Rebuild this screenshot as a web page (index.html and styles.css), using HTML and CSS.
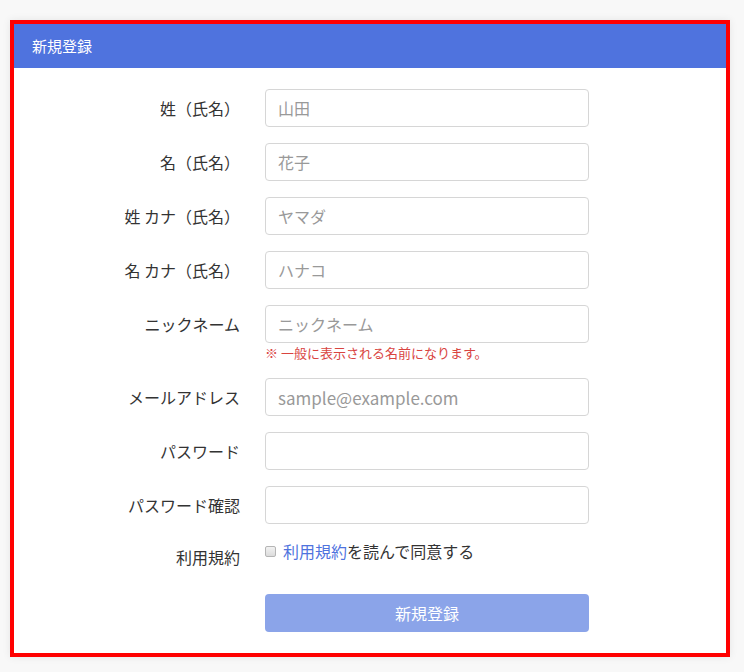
FILE: index.html
```html
<!DOCTYPE html>
<html lang="ja">
  <head>
    <meta charset="utf-8" />
    <title>新規登録</title>
    <link rel="stylesheet" href="styles.css">
  </head>
  <body>
    <div class="panel">
      <div class="panel-heading">新規登録</div>
      <form class="panel-body">
        <div class="row">
          <label class="row-label">姓（氏名）</label>
          <div class="row-field"><input type="text" placeholder="山田"></div>
        </div>
        <div class="row">
          <label class="row-label">名（氏名）</label>
          <div class="row-field"><input type="text" placeholder="花子"></div>
        </div>
        <div class="row">
          <label class="row-label">姓 カナ（氏名）</label>
          <div class="row-field"><input type="text" placeholder="ヤマダ"></div>
        </div>
        <div class="row">
          <label class="row-label">名 カナ（氏名）</label>
          <div class="row-field"><input type="text" placeholder="ハナコ"></div>
        </div>
        <div class="row">
          <label class="row-label">ニックネーム</label>
          <div class="row-field">
            <input type="text" placeholder="ニックネーム">
            <p class="help">※ 一般に表示される名前になります。</p>
          </div>
        </div>
        <div class="row">
          <label class="row-label">メールアドレス</label>
          <div class="row-field"><input type="email" placeholder="sample@example.com"></div>
        </div>
        <div class="row">
          <label class="row-label">パスワード</label>
          <div class="row-field"><input type="password"></div>
        </div>
        <div class="row">
          <label class="row-label">パスワード確認</label>
          <div class="row-field"><input type="password"></div>
        </div>
        <div class="row row-terms">
          <label class="row-label">利用規約</label>
          <div class="row-field">
            <label class="check"><span class="box"></span><a href="#">利用規約</a>を読んで同意する</label>
          </div>
        </div>
        <div class="row row-submit">
          <div class="row-label"></div>
          <div class="row-field"><button type="button" disabled>新規登録</button></div>
        </div>
      </form>
    </div>
  </body>
</html>
```

FILE: styles.css
```css
* {
  box-sizing: border-box;
}

body {
  margin: 0;
  padding: 20px 14px 15px 10px;
  background-color: #f8f8f8;
  font-family: "Noto Sans CJK JP", "Open Sans", sans-serif;
  color: #333;
}

.panel {
  width: 720px;
  height: 637px;
  border: 4px solid #ff0000;
  background-color: #fff;
  box-shadow: 0 0 8px rgba(0, 0, 0, 0.08);
}

.panel-heading {
  height: 44px;
  line-height: 44px;
  padding-left: 18px;
  background-color: #4f73de;
  color: #fff;
  font-size: 15px;
}

.panel-body {
  padding-top: 21px;
}

.row {
  display: flex;
  margin-bottom: 16px;
}

.row-label {
  width: 251px;
  padding-right: 25px;
  text-align: right;
  font-size: 16px;
  line-height: 38px;
}

.row-field {
  width: 324px;
}

input {
  display: block;
  width: 100%;
  height: 38px;
  padding: 0 12px;
  border: 1px solid #d6d6d6;
  border-radius: 4px;
  font-family: "Noto Sans CJK JP", "Open Sans", sans-serif;
  font-size: 16px;
  color: #333;
}

input[type="email"] {
  font-size: 17px;
}

input::placeholder {
  color: #999;
}

.help {
  margin: 1px 0 0 0;
  font-size: 13px;
  line-height: 18px;
  color: #d9443f;
}

.row-terms .row-label {
  padding-top: 6px;
  line-height: 22px;
}

.check {
  display: flex;
  align-items: center;
  font-size: 16px;
  line-height: 22px;
}

.box {
  width: 11px;
  height: 11px;
  margin-right: 7px;
  border: 1px solid #b5b5b5;
  border-radius: 2px;
  background: linear-gradient(#f2f2f2, #dcdcdc);
}

.check a {
  color: #4f73de;
  text-decoration: none;
}

.row-submit {
  margin-top: 26px;
}

button {
  display: block;
  width: 100%;
  height: 38px;
  border: none;
  border-radius: 4px;
  background-color: #8ba4e9;
  color: #fff;
  font-family: "Noto Sans CJK JP", "Open Sans", sans-serif;
  font-size: 16px;
}
```
